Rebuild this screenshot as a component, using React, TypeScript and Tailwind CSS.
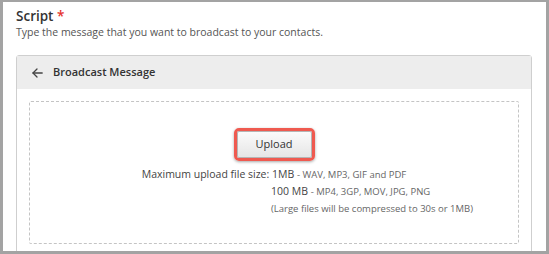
import React from 'react';

const ArrowLeft = () => (
  <svg width="11" height="10" viewBox="0 0 11 10" fill="none" stroke="#444" strokeWidth="1.3" strokeLinecap="round" strokeLinejoin="round">
    <path d="M10.2 5H1" />
    <path d="M5 1L1 5l4 4" />
  </svg>
);

const App = () => {
  return (
    <div className="w-[549px] h-[254px] overflow-hidden bg-white border-[3px] border-t-2 border-[#a3a3a3] pl-[13px] pr-[14px] font-['Open_Sans',sans-serif]">
      <div className="pt-[5px]">
        <h2 className="text-[13.5px] leading-[18px] font-semibold text-[#333]">
          Script <span className="text-[#e5312b]">*</span>
        </h2>
        <p className="text-[10.5px] leading-[15px] text-[#555]">
          Type the message that you want to broadcast to your contacts.
        </p>
      </div>

      <div className="mt-[15px] border border-[#cfcfcf] rounded-t-[3px] h-[220px]">
        <div className="h-[33px] bg-[#ededed] flex items-center gap-[10px] pl-[15px]">
          <ArrowLeft />
          <span className="text-[11px] font-semibold text-[#333]">Broadcast Message</span>
        </div>

        <div className="mx-[12px] mt-[12px] h-[143px] border border-dashed border-[#c4c4c4] rounded-[2px]">
          <div className="flex justify-center pt-[26px]">
            <div className="rounded-[5px] border-[3px] border-[#ef5a50] shadow-[0_1px_3px_rgba(0,0,0,0.35)]">
              <button className="w-[75px] h-[27px] bg-gradient-to-b from-[#fbfbfb] to-[#e6e6e6] border border-[#b5b5b5] rounded-[2px] text-[11px] text-[#333] flex items-center justify-center">
                Upload
              </button>
            </div>
          </div>

          <div className="mt-[5px] text-[10.5px] leading-[17px] text-[#444]">
            <p className="text-center">
              Maximum upload file size: 1MB <span className="text-[9.5px] text-[#666]">- WAV, MP3, GIF and PDF</span>
            </p>
            <p className="pl-[241px]">
              100 MB <span className="text-[9.5px] text-[#666]">- MP4, 3GP, MOV, JPG, PNG</span>
            </p>
            <p className="pl-[241px] text-[9.5px] text-[#666]">(Large files will be compressed to 30s or 1MB)</p>
          </div>
        </div>
      </div>
    </div>
  );
};

export default App;
